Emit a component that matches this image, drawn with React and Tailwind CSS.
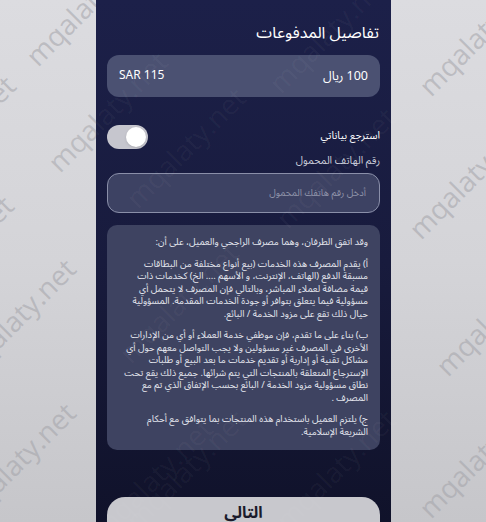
import React from "react";

const wmBg = [
  [40, 70], [62, 176], [-90, 200], [-92, 320], [-30, 383], [-30, 527],
  [433, 100], [423, 243], [450, 380], [433, 522],
];
const wmPanel = [
  [62, 176], [283, 97], [140, 212], [290, 232], [133, 367], [107, 543], [140, 534], [290, 534],
];

function Watermark({ x, y, className }) {
  return (
    <span
      className={"pointer-events-none absolute whitespace-nowrap text-[28px] leading-none origin-bottom-left -rotate-45 " + className}
      style={{ left: x, top: y - 28, fontFamily: '"Open Sans", sans-serif' }}
    >
      mqalaty.net
    </span>
  );
}

export default function App() {
  const font = { fontFamily: '"Noto Sans Arabic", "Noto Sans", "DejaVu Sans", sans-serif' };
  return (
    <div
      className="relative w-[486px] h-[522px] overflow-hidden flex bg-gradient-to-b from-[#dcdce0] via-[#d4d4d8] to-[#c6c6ca]"
      style={font}
    >
      {wmBg.map(([x, y], i) => (
        <Watermark key={"b" + i} x={x} y={y} className="z-0 text-[#a2a2a8]/55" />
      ))}

      <div className="w-[96px] shrink-0" />
      <div
        dir="rtl"
        className="relative z-10 w-[295px] shrink-0 h-full overflow-hidden flex flex-col pt-[23px] px-[11px] bg-gradient-to-b from-[#1c2049] via-[#181b3d] to-[#10122a]"
      >
        <div className="shrink-0 h-[20px] leading-[20px] text-[16px] text-white pr-[1px]">تفاصيل المدفوعات</div>

        <div className="shrink-0 mt-[12px] h-[42px] rounded-[12px] bg-[#4b5172] flex items-center justify-between px-[12px] text-[12.5px] text-white">
          <span>100 ريال</span>
          <span dir="ltr" className="text-[12px]">SAR 115</span>
        </div>

        <div className="shrink-0 mt-[28px] h-[24px] flex items-center justify-between">
          <span className="text-[10.5px] text-white">استرجع بياناتي</span>
          <div dir="ltr" className="w-[41px] h-[24px] rounded-full bg-[#c6c6ce] flex items-center justify-end pr-[2px]">
            <div className="w-[20px] h-[20px] rounded-full bg-white shadow" />
          </div>
        </div>

        <div className="shrink-0 mt-[5px] h-[14px] leading-[14px] text-[10.5px] text-[#c9ccd8]">رقم الهاتف المحمول</div>

        <div className="shrink-0 mt-[5px] h-[40px] rounded-[12px] border border-[#8a8fa9] bg-[#3d4263] flex items-center px-[13px] text-[9.5px] text-[#8f93a9]">
          أدخل رقم هاتفك المحمول
        </div>

        <div className="shrink-0 mt-[12px] h-[225px] overflow-hidden rounded-[10px] bg-[#3e4361] px-[12px] pt-[11px] text-[9.4px] leading-[12.5px] text-[#e4e6ee]">
          <p className="mb-[9px]">وقد اتفق الطرفان، وهما مصرف الراجحي والعميل، على أن:</p>
          <p className="mb-[9px]">
            أ) يقدم المصرف هذه الخدمات (بيع أنواع مختلفة من البطاقات مسبقة الدفع (الهاتف، الإنترنت، و الأسهم .... الخ) كخدمات ذات قيمة مضافة لعملاء المباشر، وبالتالي فإن المصرف لا يتحمل أي مسؤولية فيما يتعلق بتوافر أو جودة الخدمات المقدمة. المسؤولية حيال ذلك تقع على مزود الخدمة / البائع.
          </p>
          <p className="mb-[9px]">
            ب) بناء على ما تقدم، فإن موظفي خدمة العملاء أو أي من الإدارات الأخرى في المصرف غير مسؤولين ولا يجب التواصل معهم حول أي مشاكل تقنية أو إدارية أو تقديم خدمات ما بعد البيع أو طلبات الإسترجاع المتعلقة بالمنتجات التي يتم شرائها. جميع ذلك يقع تحت نطاق مسؤولية مزود الخدمة / البائع بحسب الإتفاق الذي تم مع المصرف .
          </p>
          <p>ج) يلتزم العميل باستخدام هذه المنتجات بما يتوافق مع أحكام الشريعة الإسلامية.</p>
        </div>

        <div className="shrink-0 mt-[47px] h-[44px] rounded-[18px] bg-[#c8c8cd] flex items-center justify-center text-[16px] font-bold text-[#1b1b2b] pb-[12px]">
          التالي
        </div>
      </div>
      <div className="flex-1" />

      {wmPanel.map(([x, y], i) => (
        <Watermark key={"p" + i} x={x} y={y} className="z-20 text-white/[0.045]" />
      ))}
    </div>
  );
}
